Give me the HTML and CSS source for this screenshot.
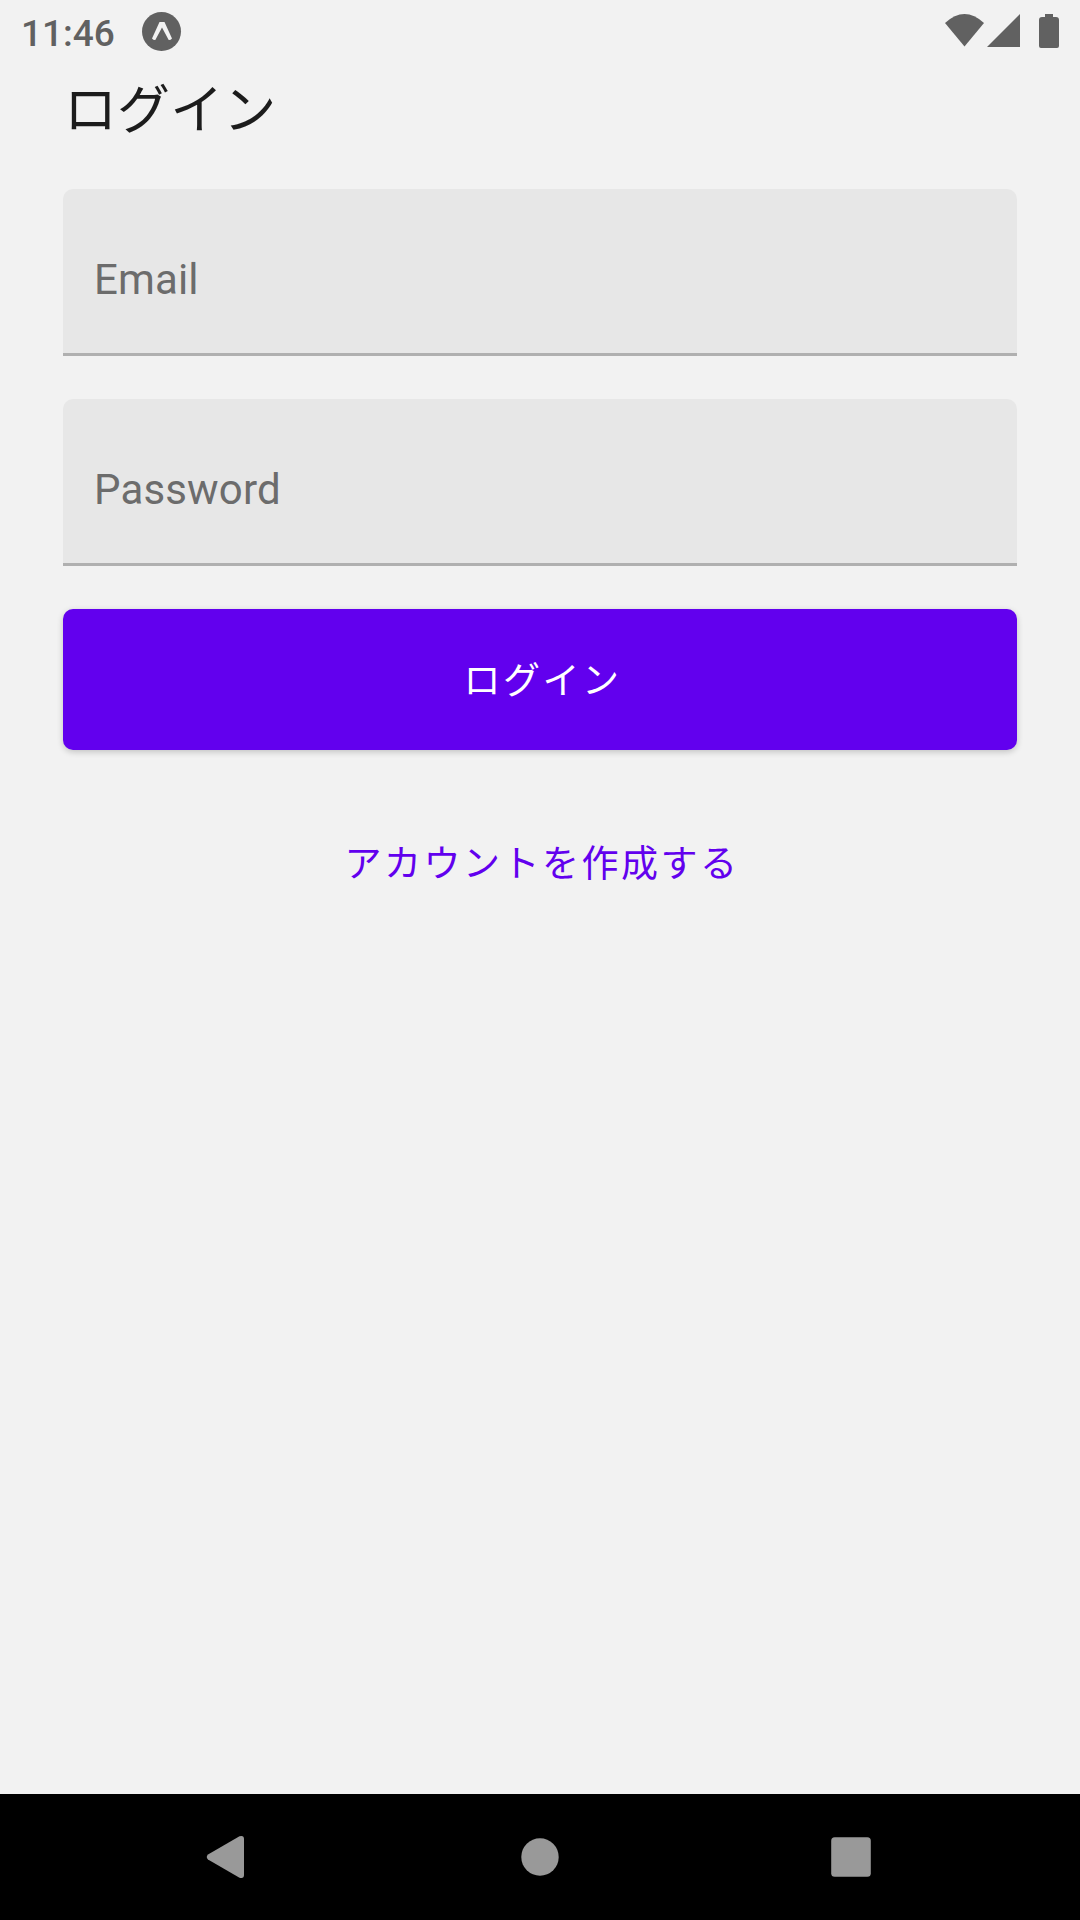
FILE: index.html
```html
<!DOCTYPE html>
<html lang="ja">
<head>
<meta charset="utf-8">
<title>ログイン</title>
<link rel="stylesheet" href="styles.css">
</head>
<body>
<div class="screen">
  <header class="status">
    <span class="clock">11:46</span>
    <svg class="expo" width="40" height="40" viewBox="0 0 40 40"><circle cx="19.500" cy="19.500" r="19.500" fill="#616161"/><path d="M17.500 10H22.500L30 26.500Q28.500 28.300 26.700 28L20 15.500L13.300 28Q11.500 28.300 10 26.500Z" fill="#f2f2f2"/></svg>
    <svg class="signals" width="116" height="36" viewBox="0 0 116 36" fill="#616161"><path d="M1 9Q20.500-9 40 9L20.500 32.500Z"/><path d="M76 0V33H43Z"/><path d="M101 0h8v3h3q3 0 3 3v26q0 2-2 2h-16q-2 0-2-2V6q0-3 3-3h3z"/></svg>
  </header>
  <main class="content">
    <h1 class="title">ログイン</h1>
    <form class="form">
      <div class="field">Email</div>
      <div class="field">Password</div>
      <button class="submit" type="button">ログイン</button>
      <a class="link">アカウントを作成する</a>
    </form>
  </main>
  <nav class="nav">
    <svg width="1080" height="126" viewBox="0 0 1080 126" fill="#999"><path d="M208 60.500L239.500 42.300Q244 41 244 45V81Q244 85 239.500 83.700L208 65.500Q205.500 63 208 60.500Z"/><circle cx="540" cy="63" r="18.700"/><rect x="831.200" y="43.200" width="39.600" height="39.600" rx="3.500"/></svg>
  </nav>
</div>
</body>
</html>
```
FILE: styles.css
```css
* { box-sizing: border-box; }
body { margin: 0; font-family: Roboto, "Noto Sans CJK JP", sans-serif; }
.screen { width: 1080px; height: 1920px; background: #f2f2f2; display: flex; flex-direction: column; }
.status { height: 63px; padding: 12px 20px 0 21px; display: flex; align-items: flex-start; color: #616161; }
.clock { font-size: 37px; font-weight: 500; line-height: 44px; width: 121px; }
.signals { margin-left: auto; margin-top: 2px; }
.content { flex: 1; padding: 0 63px; }
.title { margin: 0; height: 126px; padding: 3px 0 0 1px; font-size: 53px; font-weight: 400; line-height: 90px; letter-spacing: 0.100px; color: #1c1c1c; }
.form { display: flex; flex-direction: column; }
.field { height: 167px; margin-bottom: 43px; padding: 17px 31px 0; display: flex; align-items: center; background: #e7e7e7; border-bottom: 3px solid #b0b0b0; border-radius: 10px 10px 0 0; font-size: 42px; letter-spacing: 0.150px; color: #6c6c6c; }
.submit { height: 141px; padding: 0 0 3px 5px; border: 0; border-radius: 10px; background: #6200ee; color: #fff; font: inherit; font-size: 37px; letter-spacing: 2.500px; box-shadow: 0 2px 6px #0003; }
.link { margin-top: 85px; padding-left: 4px; text-align: center; font-size: 37px; line-height: 60px; letter-spacing: 2.500px; color: #6200ee; }
.nav { height: 126px; background: #000; }
.nav svg { display: block; }
```
